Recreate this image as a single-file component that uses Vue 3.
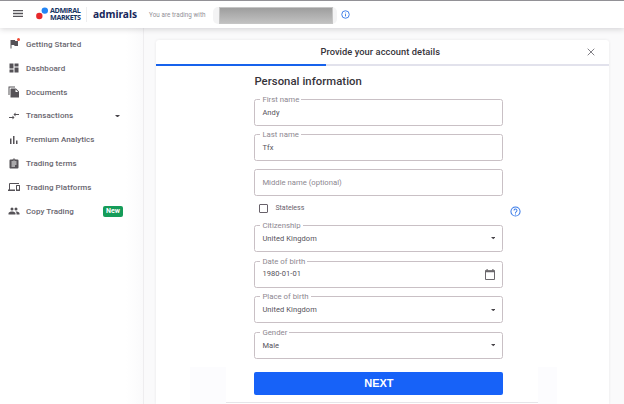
<script setup>
const nav = [
  { label: 'Getting Started', icon: 'M14.4 6L14 4H5v17h2v-7h5.6l.4 2h7V6z', alert: true },
  { label: 'Dashboard', icon: 'M3 13h8V3H3v10zm0 8h8v-6H3v6zm10 0h8V11h-8v10zm0-18v6h8V3h-8z' },
  { label: 'Documents', icon: 'M1 1h13v2H3v15H1zM7 5h9l6 6v12H5V7c0-1.100.9-2 2-2zm8 7h5.500L15 6.500z' },
  { label: 'Transactions', icon: 'M9.010 14H2v2h7.010v3L13 15l-3.990-4v3zm5.980-1v-3H22V8h-7.010V5L11 9l3.990 4z', menu: true },
  { label: 'Premium Analytics', icon: 'M4 9h3v11H4zm6-5h3v16h-3zm6 9h3v7h-3z' },
  { label: 'Trading terms', icon: 'M19 3h-4.180a3 3 0 0 0-5.640 0H5a2 2 0 0 0-2 2v14c0 1.100.9 2 2 2h14a2 2 0 0 0 2-2V5a2 2 0 0 0-2-2zm-7 0a1 1 0 1 1 0 2 1 1 0 0 1 0-2zm2 14H7v-2h7v2zm3-4H7v-2h10v2zm0-4H7V7h10v2z' },
  { label: 'Trading Platforms', icon: 'M4 6h18V4H4a2 2 0 0 0-2 2v11H0v3h14v-3H4V6zm19 2h-6a1 1 0 0 0-1 1v10a1 1 0 0 0 1 1h6a1 1 0 0 0 1-1V9a1 1 0 0 0-1-1zm-1 9h-4v-7h4v7z' },
  { label: 'Copy Trading', icon: 'M16 11a3 3 0 1 0 0-6 3 3 0 0 0 0 6zm-8 0a3 3 0 1 0 0-6 3 3 0 0 0 0 6zm0 2c-2.330 0-7 1.170-7 3.500V19h14v-2.500C15 14.170 10.330 13 8 13zm8 0-1 .05c1.160.84 2 1.970 2 3.450V19h6v-2.500c0-2.330-4.670-3.500-7-3.500z', badge: 'New' },
]
const names = [
  { label: 'First name', value: 'Andy' },
  { label: 'Last name', value: 'Tfx' },
]
const details = [
  { label: 'Citizenship', value: 'United Kingdom', type: 'select' },
  { label: 'Date of birth', value: '1980-01-01', type: 'date' },
  { label: 'Place of birth', value: 'United Kingdom', type: 'select' },
  { label: 'Gender', value: 'Male', type: 'select' },
]
</script>

<template>
  <div class="page">
    <header class="topbar">
      <svg class="burger" viewBox="0 0 10 7"><path d="M0 .5h10M0 3.500h10M0 6.500h10" /></svg>
      <div class="brand">
        <svg class="dots" viewBox="0 0 13 13"><circle cx="8.800" cy="3.600" r="3.200" fill="#2385f5" /><circle cx="3.300" cy="9" r="3.200" fill="#e7292b" /></svg>
        <div class="brand-name"><span>ADMIRAL</span><span>MARKETS</span></div>
      </div>
      <div class="wordmark">admirals</div>
      <div class="trading">You are trading with</div>
      <div class="account"><div class="mask"></div></div>
      <svg class="info" viewBox="0 0 24 24"><circle cx="12" cy="12" r="10" /><path d="M12 11v6M12 7v2" /></svg>
    </header>
    <div class="body">
      <nav class="sidebar">
        <a v-for="n in nav" :key="n.label" class="item">
          <span class="icon">
            <svg viewBox="0 0 24 24"><path fill-rule="evenodd" :d="n.icon" /></svg>
            <i v-if="n.alert" class="alert"></i>
          </span>
          <span class="item-label">{{ n.label }}</span>
          <svg v-if="n.menu" class="caret nav-caret" viewBox="0 0 10 5"><path d="M0 0h10L5 5z" /></svg>
          <span v-if="n.badge" class="badge">{{ n.badge }}</span>
        </a>
      </nav>
      <main class="main">
        <section class="card">
          <div class="card-head">
            <h1>Provide your account details</h1>
            <svg class="close" viewBox="0 0 8 8"><path d="M.7.7l6.600 6.600M7.300.7L.7 7.300" /></svg>
          </div>
          <div class="progress"><div class="bar"></div></div>
          <form class="form">
            <h2>Personal information</h2>
            <div class="group">
              <div v-for="f in names" :key="f.label" class="field">
                <label>{{ f.label }}</label>
                <span class="value">{{ f.value }}</span>
              </div>
              <div class="field"><span class="placeholder">Middle name (optional)</span></div>
            </div>
            <div class="check-row">
              <span class="box"></span>
              <span class="check-label">Stateless</span>
              <svg class="help" viewBox="0 0 24 24"><circle cx="12" cy="12" r="10" /><path d="M8.800 10a3.200 3.200 0 1 1 5 2.400C12.600 13.300 12 13.600 12 15M12 16.600v2" /></svg>
            </div>
            <div class="group details">
              <div v-for="f in details" :key="f.label" class="field">
                <label>{{ f.label }}</label>
                <span class="value">{{ f.value }}</span>
                <svg v-if="f.type === 'select'" class="caret" viewBox="0 0 10 5"><path d="M0 0h10L5 5z" /></svg>
                <svg v-else class="calendar" viewBox="0 0 10 11"><path d="M.5 2h9v8.500h-9z" fill="none" stroke="#6b686c" /><path d="M0 1.200h10v2H0zM1.500 0h1.200v2H1.500zM7.300 0h1.200v2H7.300z" /></svg>
              </div>
            </div>
          </form>
          <footer class="footer">
            <div class="edge"></div>
            <div class="action"><button>NEXT</button></div>
            <div class="edge"></div>
          </footer>
        </section>
      </main>
    </div>
  </div>
</template>

<style>
body { margin: 0; overflow: hidden; }
</style>

<style scoped>
* { box-sizing: border-box; }
.page { width: 624px; height: 404px; display: flex; flex-direction: column; overflow: hidden; background: #fff; font-family: Roboto, "Liberation Sans", sans-serif; color: #454247; }
svg { display: block; flex: none; }
.topbar { height: 28px; flex: none; display: flex; align-items: center; border-top: 1px solid #929196; padding-left: 13px; background: #fff; box-shadow: 0 1px 6px rgba(40, 35, 45, .2); z-index: 1; }
.topbar > * { flex: none; }
.burger { width: 10px; height: 7px; margin-top: -3px; }
.burger path { stroke: #555358; stroke-width: 1.300; }
.brand { display: flex; align-items: center; width: 51px; height: 15px; margin: -1px 0 0 13px; border-right: 1px solid #eeeef0; }
.dots { width: 13px; height: 13px; margin-top: -1px; }
.brand-name { display: flex; flex-direction: column; margin: -1px 0 0 1px; font: 700 7.200px/6.600px "Open Sans", sans-serif; letter-spacing: -.4px; color: #183563; }
.wordmark { width: 56px; margin: -2px 0 0 6px; font: 700 10.200px/14px "Noto Sans", sans-serif; color: #17275b; }
.trading { width: 62px; font-size: 6.300px; line-height: 8px; color: #919097; white-space: nowrap; letter-spacing: .05px; margin-top: 1px; }
.account { width: 124px; height: 17px; margin: 1px 0 0 2px; padding: 0 4px 0 6px; border-radius: 5px; background: #f3f3f4; }
.mask { height: 17px; background: linear-gradient(#9e9e9e, #c1c1c1); border: 1px solid #c5c5c5; }
.info { width: 9px; height: 9px; margin-left: 4px; }
.info, .help { fill: none; stroke: #397ae8; stroke-width: 2.500; }
.body { display: flex; flex: 1; min-height: 0; }
.sidebar { width: 144px; flex: none; padding-top: 4.400px; background: linear-gradient(90deg, #fff 88%, #fafafb); border-right: 1px solid #eeedef; }
.item { height: 23.850px; display: flex; align-items: center; padding-left: 8px; }
.icon { position: relative; width: 12px; margin-right: 6px; }
.icon svg { width: 12px; height: 12px; fill: #555257; }
.alert { position: absolute; top: 0; right: 0; width: 3px; height: 3px; border-radius: 50%; background: #f04b35; }
.item-label { font-size: 8px; font-weight: 500; color: #68656e; letter-spacing: .06px; white-space: nowrap; }
.nav-caret { margin-left: auto; margin-right: 23px; }
.caret { width: 5px; height: 2.500px; fill: #48454a; }
.field .caret { width: 4.500px; height: 2.300px; }
.badge { margin-left: auto; margin-right: 20px; width: 20px; height: 11px; border-radius: 2px; background: #159c59; color: #fff; font-size: 7px; font-weight: 700; line-height: 11px; text-align: center; }
.main { flex: 1; display: flex; padding: 12px 15px 0 11.500px; background: #fafafb; }
.card { flex: 1; display: flex; flex-direction: column; background: #fff; border-radius: 3px 3px 0 0; box-shadow: 0 0 3px rgba(50, 40, 60, .09); }
.card-head { height: 24px; flex: none; display: grid; grid-template-columns: 1fr auto 1fr; align-items: center; }
h1, h2 { margin: 0; font-weight: 500; color: #36333a; }
h1 { grid-column: 2; font-size: 9.300px; line-height: 12px; margin-left: -4px; letter-spacing: .06px; white-space: nowrap; }
.close { width: 8px; height: 8px; justify-self: end; margin-right: 14.500px; fill: none; stroke: #747278; stroke-width: .9; }
.progress { height: 2px; flex: none; background: #e2e2ec; }
.bar { width: 170px; height: 2px; background: #1762ec; }
.form { width: 249px; margin-left: 98.900px; padding-top: 9px; }
h2 { font-size: 11.300px; line-height: 14px; letter-spacing: .06px; white-space: nowrap; }
.group { display: grid; gap: 8px; margin-top: 10px; }
.details { gap: 8.700px; margin-top: 5px; }
.field { position: relative; height: 27px; display: flex; align-items: center; justify-content: space-between; padding: 0 7px; border: 1px solid #c9c0c5; border-radius: 2.500px; font-size: 7.500px; line-height: 9px; color: #55515a; }
.field label { position: absolute; left: 5px; top: -5px; padding: 0 2px; background: #fff; color: #8d8790; font-size: 7.800px; line-height: 9px; white-space: nowrap; }
.value { letter-spacing: .08px; margin-top: -1px; }
.placeholder { color: #8d8790; font-size: 7.700px; }
.calendar { width: 10px; height: 11px; fill: #6b686c; }
.check-row { height: 24px; display: flex; align-items: center; padding-left: 5px; margin-right: -18px; }
.box { width: 9px; height: 9px; border: 1px solid #68616a; border-radius: 1px; }
.check-label { margin-left: 7px; font-size: 7px; color: #68626c; }
.help { width: 11px; height: 11px; margin-left: auto; margin-top: 7px; stroke-width: 2.200; }
.footer { display: grid; grid-template-columns: 36px 312px 19px; margin: 8px 0 0 34.500px; height: 38px; }
.edge { background: #fcfcfe; }
.action { padding: 5px 35px 0 28.400px; height: 36px; border-bottom: 1px solid #e6e5e9; }
button { display: block; width: 249px; height: 23px; border: 0; border-radius: 2px; padding: 0; background: #1762f8; color: #fff; font: 700 11px/23px "Liberation Sans", Arial, sans-serif; }
</style>
